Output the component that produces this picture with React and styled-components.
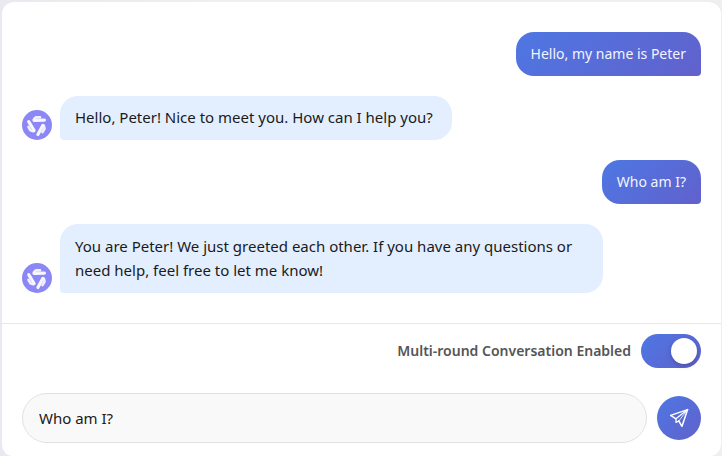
import React from 'react';
import styled, { createGlobalStyle } from 'styled-components';

const Global = createGlobalStyle`
  *{box-sizing:border-box}
  html,body{margin:0;height:456px;overflow:hidden;background:linear-gradient(90deg,#e9e9f0,#efefef 30%)}
  body{font-family:"Noto Sans",sans-serif}
`;
const Panel = styled.main`
  display:flex;flex-direction:column;
  height:456px;border:solid transparent;border-width:2px 1px 0 2px;
  background:#fff padding-box;border-radius:14px 14px 12px 12px;overflow:hidden;
`;
const Messages = styled.section`
  flex:none;height:321px;padding:30px 20px 0;
  display:flex;flex-direction:column;gap:20px;
`;
const Row = styled.div`
  display:flex;align-items:flex-end;gap:8px;
  justify-content:${p => (p.$mine ? 'flex-end' : 'flex-start')};
`;
const Bubble = styled.div`
  padding:${p => (p.$mine ? '10px 15px' : '9px 19px 11px 15px')};
  font-size:${p => (p.$mine ? 14 : 15)}px;line-height:24px;
  color:${p => (p.$mine ? '#f3f4ff' : '#1a1a1a')};
  background:${p => (p.$mine ? 'linear-gradient(135deg,#4e77e3,#6161cc)' : '#e3efff')};
  border-radius:${p => (p.$mine ? '18px 18px 4px 18px' : '18px 18px 18px 4px')};
  max-width:543px;
`;
const LongBubble = styled(Bubble)`padding-top:10px;`;
const AvatarCircle = styled.div`
  width:30px;height:30px;border-radius:50%;background:#8b87f5;
  svg{display:block}
`;
const Footer = styled.footer`
  border-top:1px solid #e6e8eb;padding:10px 20px 0;
`;
const ToggleRow = styled.div`
  display:flex;justify-content:flex-end;align-items:center;gap:10px;
  font-size:14px;font-weight:600;color:#555;
`;
const ToggleLabel = styled.span`padding-bottom:2px;`;
const Toggle = styled.button`
  width:60px;height:34px;padding:4px;border:0;border-radius:17px;
  background:linear-gradient(135deg,#4e77e3,#6161cc);
  display:flex;justify-content:flex-end;
`;
const Knob = styled.span`
  width:26px;height:26px;border-radius:50%;background:#fff;
  box-shadow:0 2px 5px rgba(0,0,0,.2);
`;
const Compose = styled.div`display:flex;align-items:center;gap:10px;margin-top:25px;`;
const Field = styled.input`
  flex:1;height:50px;border:1px solid #dfe1e5;border-radius:25px;background:#f9f9f9;
  padding:0 16px;font:15px "Noto Sans",sans-serif;color:#1a1a1a;outline:0;
`;
const Send = styled.button`
  width:44px;height:44px;border:0;border-radius:50%;padding:0;
  background:linear-gradient(135deg,#4e77e3,#6161cc);
  display:flex;align-items:center;justify-content:center;
`;

const Avatar = () => (
  <AvatarCircle>
    <svg width="30" height="30" viewBox="0 0 30 30" fill="none" strokeLinecap="round" strokeLinejoin="round">
      {[0, 120, 240].map(a => (
        <g key={a} transform={`rotate(${a} 15 15.4)`}>
          <path d="M12 9.2 14 7.3H18" stroke="#f1efff" strokeWidth="2.7" />
          <path d="M12 10.3 22.4 10.1" stroke="#f8f7ff" strokeWidth="3.2" />
          <path d="M14 9 18 8.8" stroke="#dcd9fd" strokeWidth=".6" />
        </g>
      ))}
    </svg>
  </AvatarCircle>
);

const SendIcon = () => (
  <svg width="44" height="44" viewBox="0 0 44 44" fill="none" stroke="#fff" strokeWidth="1.5" strokeLinejoin="round" strokeLinecap="round">
    <path d="M19 22.8 13.6 19.4 30.6 13.6 25 30.3 21.8 25" />
    <path d="M30.6 13.6 19 22.8V26.4L21.8 25" strokeWidth="1.3" />
    <path d="M30.6 13.6 21.8 25" strokeWidth=".8" />
  </svg>
);

export default function App() {
  return (
    <><Global /><Panel>
      <Messages>
        <Row $mine><Bubble $mine>Hello, my name is Peter</Bubble></Row>
        <Row><Avatar /><Bubble>Hello, Peter! Nice to meet you. How can I help you?</Bubble></Row>
        <Row $mine><Bubble $mine>Who am I?</Bubble></Row>
        <Row><Avatar /><LongBubble>You are Peter! We just greeted each other. If you have any questions or need help, feel free to let me know!</LongBubble></Row>
      </Messages>
      <Footer>
        <ToggleRow><ToggleLabel>Multi-round Conversation Enabled</ToggleLabel><Toggle aria-label="Multi-round conversation"><Knob /></Toggle></ToggleRow>
        <Compose><Field defaultValue="Who am I?" /><Send aria-label="Send"><SendIcon /></Send></Compose>
      </Footer>
    </Panel></>
  );
}
